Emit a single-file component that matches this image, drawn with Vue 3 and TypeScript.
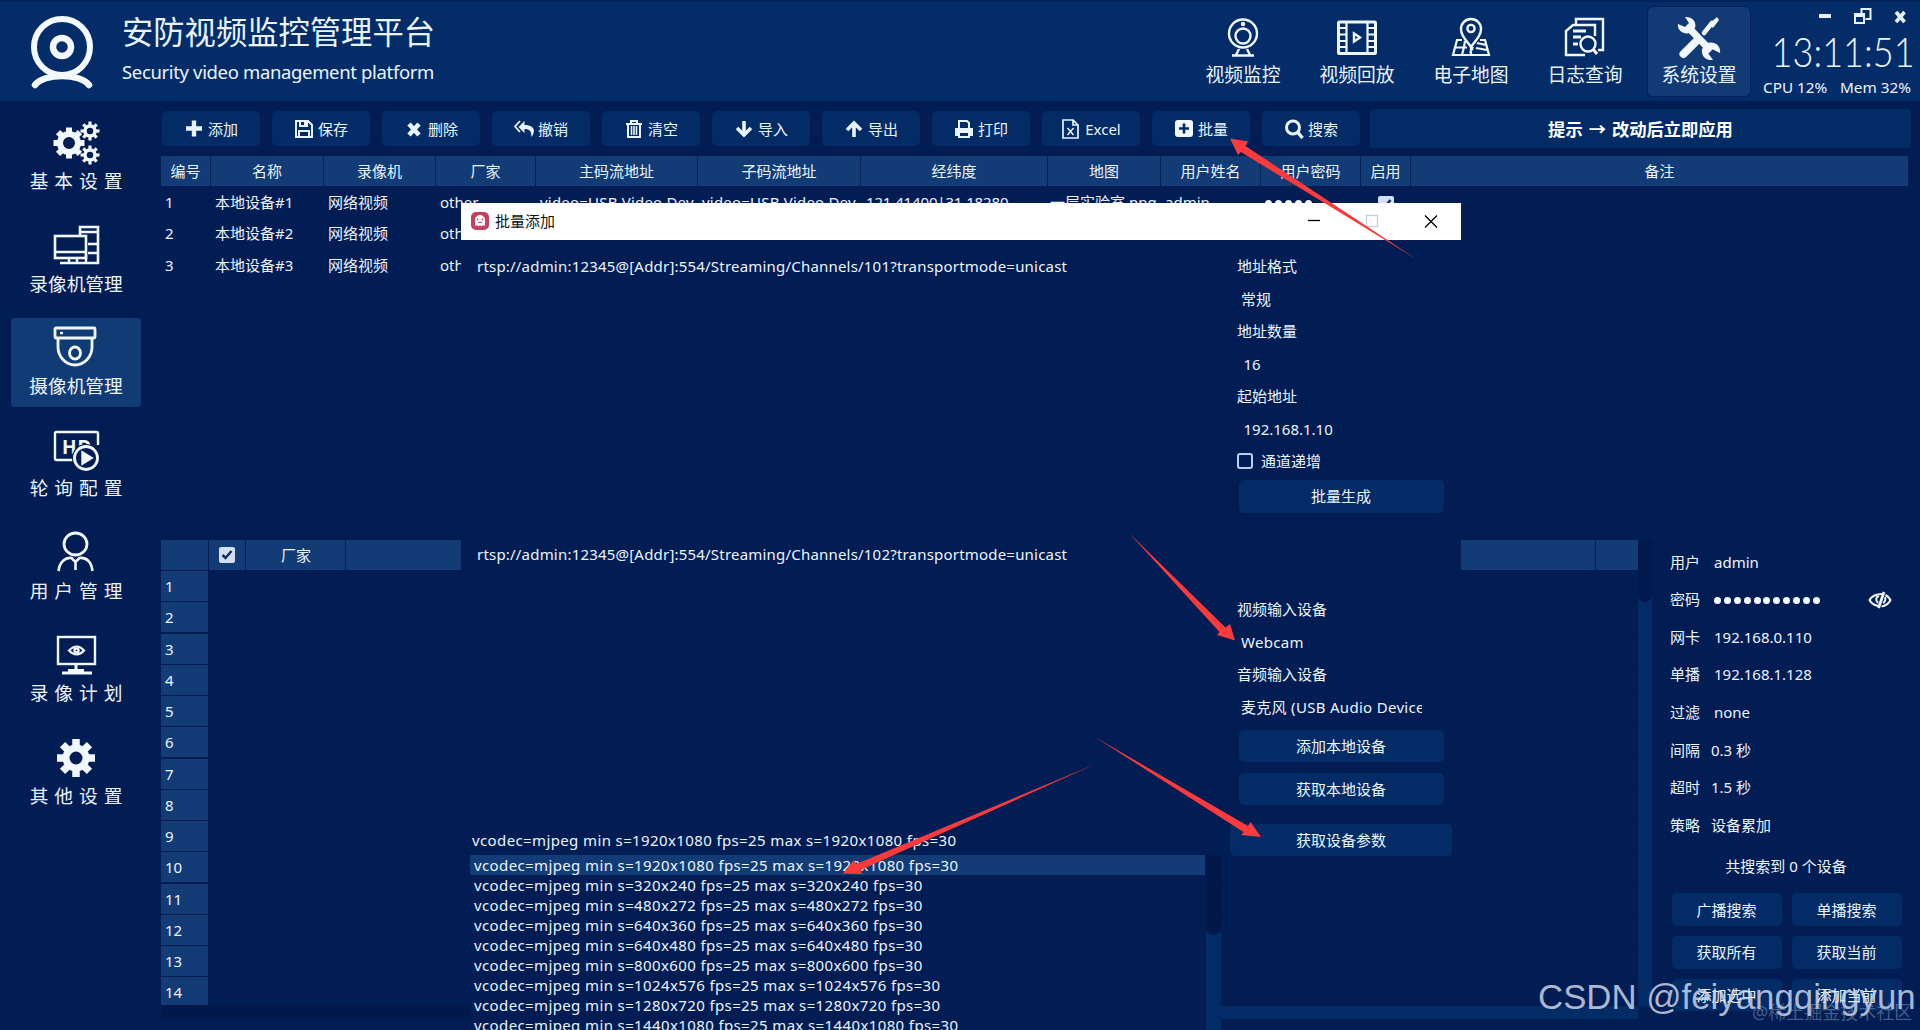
<script setup lang="ts">
import { ref } from 'vue'

interface Column { title: string; width: number }

const navItems = ['视频监控', '视频回放', '电子地图', '日志查询', '系统设置']
const sideItems = ['基本设置', '录像机管理', '摄像机管理', '轮询配置', '用户管理', '录像计划', '其他设置']
const tools = ['添加', '保存', '删除', '撤销', '清空', '导入', '导出', '打印', 'Excel', '批量', '搜索']
const activeNav = ref(4)
const activeSide = ref(2)

const columns: Column[] = [
  { title: '编号', width: 50 },
  { title: '名称', width: 113 },
  { title: '录像机', width: 112 },
  { title: '厂家', width: 100 },
  { title: '主码流地址', width: 162 },
  { title: '子码流地址', width: 163 },
  { title: '经纬度', width: 187 },
  { title: '地图', width: 113 },
  { title: '用户姓名', width: 100 },
  { title: '用户密码', width: 100 },
  { title: '启用', width: 50 },
  { title: '备注', width: 498 },
]
const videoName = 'video=USB Video Dev'
const devices = [1, 2, 3].map((n) => [
  String(n), '本地设备#' + n, '网络视频', 'other', videoName, videoName,
  '121.41400|31.18280', '一层实验室.png', 'admin', '', '', '',
])

const settings = [
  ['用户', 'admin', 'edit'],
  ['密码', '', 'edit'],
  ['网卡', '192.168.0.110', 'edit'],
  ['单播', '192.168.1.128', 'edit'],
  ['过滤', 'none', 'edit'],
  ['间隔', '0.3 秒', ''],
  ['超时', '1.5 秒', ''],
  ['策略', '设备累加', ''],
]
const searchButtons = ['广播搜索', '单播搜索', '获取所有', '获取当前', '添加选中', '添加当前']

const modes = [
  '1920x1080', '320x240', '480x272', '640x360', '640x480',
  '800x600', '1024x576', '1280x720', '1440x1080',
]
const modeText = (size: string) => `vcodec=mjpeg min s=${size} fps=25 max s=${size} fps=30`
const gearTeeth = [0, 45, 90, 135, 180, 225, 270, 315]
</script>

<template>
  <div class="page">
    <header class="top">
      <svg class="logo" width="64" height="74" viewBox="0 0 64 74" fill="none" stroke="#f4f9ff" stroke-linecap="round">
        <ellipse cx="32" cy="31" rx="28" ry="28" stroke-width="6" />
        <circle cx="32" cy="31" r="9" stroke-width="6.500" />
        <path d="M5 69C14 57 50 57 59 69" stroke-width="6.500" />
      </svg>
      <div class="titles">
        <div class="title">安防视频监控管理平台</div>
        <div class="subtitle">Security video management platform</div>
      </div>
      <nav class="nav">
        <div v-for="(item, i) in navItems" :key="item" class="nav-item" :class="{ on: i === activeNav }">
          <svg width="46" height="44" viewBox="0 0 46 44" fill="none" stroke="#f0f7ff" stroke-width="2.400">
            <g v-if="i === 0">
              <circle cx="23" cy="17.500" r="14" />
              <circle cx="23" cy="20" r="7.500" />
              <circle cx="23" cy="8" r="1" />
              <path d="M19 33l-3 6M27 33l3 6M12 39.500h22" />
            </g>
            <g v-else-if="i === 1">
              <rect x="4.500" y="6" width="37" height="31.500" rx="1" stroke-width="3" />
              <path d="M12.500 6v31M33.500 6v31M5 12h7M5 18.500h7M5 25h7M5 31h7M34 12h7M34 18.500h7M34 25h7M34 31h7" stroke-width="2.200" />
              <path d="M20 17.500v8l6-4z" />
            </g>
            <g v-else-if="i === 2">
              <path d="M23 31C17 23 13 19 13 13a10 10 0 0 1 20 0C33 19 29 23 23 31z" />
              <circle cx="23" cy="12.500" r="3.600" />
              <path d="M14 24H9L5 39h36L37 24h-5M7 31.500h12M29 27l9 2M28 32l11 2M17 25l-1 6-2 8M23 31v8M25 31l-3 6" stroke-width="2.200" />
            </g>
            <g v-else-if="i === 3">
              <path d="M14 8V3h27v31h-5" />
              <path d="M33 20V9H11L4 15v24h19" />
              <path d="M11 15h13M11 21h8M11 28h5" stroke-width="2.800" />
              <circle cx="26" cy="28" r="7.500" />
              <path d="M31 33l4 5" stroke-width="3" />
            </g>
            <g v-else stroke-linecap="round">
              <path d="M7.500 38L19 26.500" stroke-width="8" />
              <path d="M28 17L36 7" stroke-width="4.500" />
              <path d="M33 8l8-7 2 3-6 8z" fill="#f0f7ff" stroke="none" />
              <path d="M11 10L35 35" stroke-width="7" stroke-linecap="butt" />
              <path fill="#f0f7ff" stroke="none" d="M9 1l4 6-4 4-7-3C1 14 7 19 14 17l5-5C21 6 16 0 9 1zM37 44l-5-7 4-4 8 4c1-7-5-12-12-10l-6 6c-1 7 4 12 11 11z" />
            </g>
          </svg>
          <span>{{ item }}</span>
        </div>
      </nav>
      <div class="status">
        <svg class="winctl" width="96" height="20" viewBox="0 0 96 20" fill="none" stroke="#e8f2ff">
          <path d="M4 10h12" stroke-width="4" />
          <path d="M46.500 8V3h9v10h-5" stroke-width="2" />
          <rect x="40" y="8" width="9" height="9" stroke-width="2" />
          <path d="M39.500 9.500h10" stroke-width="3" />
          <path d="M81 6l8.500 10M89.500 6l-8.500 10" stroke-width="3.600" />
        </svg>
        <div class="clock"><span>13:11:51</span></div>
        <div class="usage"><span>CPU 12%</span><span>Mem 32%</span></div>
      </div>
    </header>

    <div class="body">
      <aside class="side">
        <div v-for="(item, i) in sideItems" :key="item" class="side-item" :class="{ on: i === activeSide, wide: item.length === 4 }">
          <svg width="50" height="44" viewBox="0 0 50 44" fill="none" stroke="#f0f7ff" stroke-width="2.400">
            <g v-if="i === 0">
              <circle cx="18" cy="22" r="9" stroke-width="6" />
              <g stroke-width="6"><path v-for="a in gearTeeth" :key="a" d="M18 11V6.500" :transform="`rotate(${a} 18 22)`" /></g>
              <g v-for="cy in [10, 34]" :key="cy">
                <circle cx="39" :cy="cy" r="5" stroke-width="3.500" />
                <path v-for="a in gearTeeth" :key="a" :d="`M39 ${cy - 6}v-3.500`" stroke-width="3.200" :transform="`rotate(${a} 39 ${cy})`" />
              </g>
            </g>
            <g v-else-if="i === 1">
              <path d="M29 12V4h18v36H9" stroke-width="2.600" />
              <rect x="4" y="13" width="31" height="22" stroke-width="2.600" />
              <path d="M4 29h31M29 9h18M37 21h9M37 30h9M18 35v4M26 35v4M35 31v8" />
            </g>
            <g v-else-if="i === 2">
              <rect x="4" y="2" width="40" height="10" rx="1" stroke-width="2.800" />
              <path d="M7 12v9c0 10 8 18 17 18s17-8 17-18v-9" stroke-width="2.800" />
              <ellipse cx="24" cy="27" rx="5.500" ry="6" stroke-width="2.800" />
              <path d="M9 7h3" />
            </g>
            <g v-else-if="i === 3">
              <path d="M22 32H5.500Q4 32 4 30.500V5.500Q4 4 5.500 4h40Q47 4 47 5.500V17" />
              <text x="11" y="25.500" class="hd">HD</text>
              <circle cx="35" cy="30" r="14" fill="#021d54" stroke="none" />
              <circle cx="35" cy="30" r="11.500" stroke-width="2.800" />
              <path d="M31.500 24.500v11l9-5.500z" fill="#f0f7ff" />
            </g>
            <g v-else-if="i === 4">
              <ellipse cx="24.500" cy="14" rx="11.500" ry="11" stroke-width="2.800" />
              <path d="M7.500 41c1-9 7-14 13-13l4 4 4-4c7-1 12 4 13 13M24.500 32v8" stroke-width="2.600" />
            </g>
            <g v-else-if="i === 5">
              <rect x="7" y="4" width="37" height="27" />
              <path d="M25 31v9M11 40h30" stroke-width="3" />
              <path d="M17 39h16v-3H17z" fill="#f0f7ff" stroke="none" />
              <path d="M18 17.500q8-8 15 0q-7 8-15 0z" stroke-width="2.200" />
              <circle cx="25.500" cy="17.500" r="2" />
            </g>
            <g v-else>
              <circle cx="25" cy="23" r="10" stroke-width="7" />
              <g stroke-width="7.500"><path v-for="a in gearTeeth" :key="a" d="M25 10.500V4" :transform="`rotate(${a} 25 23)`" /></g>
            </g>
          </svg>
          <span>{{ item }}</span>
        </div>
      </aside>

      <main class="main">
        <div class="toolbar">
          <button v-for="(t, i) in tools" :key="t" type="button" class="btn tool">
            <svg width="20" height="20" viewBox="0 0 20 20" fill="none" stroke="#e8f3ff" stroke-width="2">
              <path v-if="i === 0" d="M10 1.500v16M2 9.500h16" stroke-width="4.400" />
              <g v-else-if="i === 1"><path d="M2 2h12l4 4v12H2zM6 2v5h7V2M5 18v-6h10v6" /><path d="M11 3v3" /></g>
              <path v-else-if="i === 2" d="M5 5l10 11M15 5L5 16" stroke-width="4.600" />
              <g v-else-if="i === 3"><path d="M10.500 2L4.500 8l6 6v-4c5 0 7 2 7 8 5-7 2-12-7-12z" fill="#e8f3ff" stroke="none" /><path d="M6 2L1 7.500 6 13" stroke-width="1.800" /></g>
              <g v-else-if="i === 4"><path d="M4 6v12h12V6M2 5h16M7 4V2h6v2" /><path d="M7.500 7v9M10 7v9M12.500 7v9" stroke-width="1.600" /></g>
              <path v-else-if="i === 5" d="M10 2v14M3 9l7 7 7-7" stroke-width="3.600" />
              <path v-else-if="i === 6" d="M10 18V4M3 11l7-7 7 7" stroke-width="3.600" />
              <g v-else-if="i === 7"><path d="M5 9V2h8l2 2v5" /><path d="M1 9h18v8h-3v-3H4v3H1z" fill="#e8f3ff" stroke="none" /><path d="M5 14v4h10v-4" /></g>
              <g v-else-if="i === 8"><path d="M2 1h10l5 5v13H2zM12 1v5h5" stroke-width="1.700" /><path d="M6.500 9l6 7M12.500 9l-6 7" stroke-width="1.500" /></g>
              <g v-else-if="i === 9"><rect x="1" y="1" width="18" height="17" rx="3" fill="#f4f9ff" stroke="none" /><path d="M10 4.500v10M5 9.500h10" stroke="#032c66" stroke-width="2.600" /></g>
              <g v-else><circle cx="9" cy="8.500" r="6.500" stroke-width="3" /><path d="M13.500 13l5 6" stroke-width="3.400" /></g>
            </svg>
            <span>{{ t }}</span>
          </button>
          <div class="hint">提示 → 改动后立即应用</div>
        </div>

        <section class="devices">
          <div class="tr head">
            <div v-for="c in columns" :key="c.title" class="th" :style="{ width: c.width + 'px' }">{{ c.title }}</div>
          </div>
          <div v-for="row in devices" :key="row[0]" class="tr">
            <div v-for="(cell, j) in row" :key="j" class="td" :style="{ width: columns[j].width + 'px' }">
              <span v-if="j === 9" class="dots small"><i v-for="d in 5" :key="d"></i></span>
              <span v-else-if="j === 10" class="check on"><svg width="16" height="16" viewBox="0 0 16 16" fill="none" stroke="#12305f" stroke-width="2.500"><path d="M3.500 8l3 3 6-7" /></svg></span>
              <template v-else>{{ cell }}</template>
            </div>
          </div>
        </section>

        <div class="lower">
          <section class="found">
            <div class="found-main">
              <div class="frow fhead">
                <div class="f0"></div>
                <div class="f1"><span class="check on"><svg width="16" height="16" viewBox="0 0 16 16" fill="none" stroke="#12305f" stroke-width="2.500"><path d="M3.500 8l3 3 6-7" /></svg></span></div>
                <div class="f2">厂家</div>
                <div class="f3"></div>
                <div class="f4"></div>
              </div>
              <div v-for="n in 14" :key="n" class="frow">
                <div class="f0">{{ n }}</div>
                <div class="fline"></div>
              </div>
              <div class="hscroll"><i></i></div>
            </div>
            <div class="vscroll"><i></i></div>
          </section>

          <section class="panel">
            <div v-for="s in settings" :key="s[0]" class="field">
              <span class="lab">{{ s[0] }}</span>
              <span v-if="s[0] === '密码'" class="dots"><i v-for="d in 11" :key="d"></i></span>
              <span v-else class="val" :class="s[2]">{{ s[1] }}</span>
              <svg v-if="s[0] === '密码'" class="eye" width="24" height="18" viewBox="0 0 24 18" fill="none" stroke="#f0f7ff" stroke-width="2">
                <path d="M10 15C6 14 3 12 1.500 9 4 5 8 3 14 3M17.500 4c2 1 4 3 5 5-2 4-5 6-9 6.500" />
                <path d="M10.500 17L16 1" stroke-width="2.800" />
                <path d="M11 5c-3 1-4 4-1 7M17 6c1 2 0 5-2 6" />
              </svg>
            </div>
            <div class="count">共搜索到 0 个设备</div>
            <div class="grid">
              <button v-for="b in searchButtons" :key="b" type="button" class="btn">{{ b }}</button>
            </div>
          </section>
        </div>
      </main>
    </div>

    <section class="dialog">
      <div class="dlg-title">
        <svg width="18" height="18" viewBox="0 0 18 18">
          <rect width="18" height="18" rx="5" fill="#c4405f" />
          <path d="M4 14V8a5 5 0 0 1 10 0v6l-2-1-1.500 1.500L9 13l-1.500 1.500L6 13z" fill="#fff" />
          <path d="M6.500 6.500v2M11.500 6.500v2M7 10.500h4" stroke="#c4405f" stroke-width="1.200" />
        </svg>
        <span>批量添加</span>
        <svg class="dlg-ctl" width="132" height="14" viewBox="0 0 132 14" fill="none" stroke="#000" stroke-width="1.300">
          <path d="M0 6.500h12" />
          <rect x="58.500" y="1.500" width="11" height="11" stroke="#c4d2d4" />
          <path d="M117 1.500l12 12M129 1.500l-12 12" />
        </svg>
      </div>
      <div class="dlg-body">
        <div class="urls">
          <div class="url first">rtsp://admin:12345@[Addr]:554/Streaming/Channels/101?transportmode=unicast</div>
          <div class="url second">rtsp://admin:12345@[Addr]:554/Streaming/Channels/102?transportmode=unicast</div>
          <div class="combo">{{ modeText('1920x1080') }}</div>
        </div>
        <div class="form">
          <div class="fl">地址格式</div>
          <div class="fv sel">常规</div>
          <div class="fl">地址数量</div>
          <div class="fv">16</div>
          <div class="fl">起始地址</div>
          <div class="fv">192.168.1.10</div>
          <div class="fl inc"><i class="box"></i>通道递增</div>
          <button type="button" class="btn gen">批量生成</button>
          <div class="fl vin">视频输入设备</div>
          <div class="fv sel cam">Webcam</div>
          <div class="fl">音频输入设备</div>
          <div class="fv sel mic">麦克风 (USB Audio Device)</div>
          <button type="button" class="btn b1">添加本地设备</button>
          <button type="button" class="btn b2">获取本地设备</button>
          <button type="button" class="btn b3">获取设备参数</button>
        </div>
      </div>
    </section>

    <div class="popup">
      <div class="opts">
        <div v-for="(m, i) in modes" :key="m" class="opt" :class="{ on: i === 0 }">{{ modeText(m) }}</div>
      </div>
      <div class="pscroll"><i></i></div>
    </div>

    <svg class="arrows" width="1920" height="1030" viewBox="0 0 1920 1030" fill="#fb3b3b">
      <path d="M1230 138.500L1248 141.500 1245.500 146 1417 259.500 1241 152 1238 155z" />
      <path d="M1235 640.500L1230 624 1225.500 627.500 1129 533 1219.500 632 1217 635z" />
      <path d="M1261 837L1250.500 822 1248 826 1094 736.500 1243.500 832 1241 835z" />
      <path d="M843 873.500L854 860 856.500 864 1095.500 764 860.500 870 862 874z" />
    </svg>
    <div class="mark csdn">CSDN @feiyangqingyun</div>
    <div class="mark juejin">@稀土掘金技术社区</div>
  </div>
</template>

<style>
body { background: #021d54; overflow: hidden; }
</style>

<style scoped>
.page {
  position: relative; width: 1920px; height: 1030px; overflow: hidden;
  display: flex; flex-direction: column; background: #021d54; color: #eaf4ff;
  font: 15px/20px "Noto Sans", "Noto Sans CJK SC", sans-serif; white-space: nowrap;
}
.page, .page * { box-sizing: border-box; }
i { display: block; }
.btn {
  border: 0; border-radius: 5px; background: #032c66; color: #eaf4ff; padding: 0;
  font: 15px/20px "Noto Sans", "Noto Sans CJK SC", sans-serif;
}

.top { flex: none; height: 101px; display: flex; background: #032c68; border-top: 2px solid #02245a; }
.logo { margin: 14px 0 0 30px; }
.titles { margin-left: 28px; width: 400px; }
.title { font-size: 31.300px; line-height: 40px; margin-top: 10px; }
.subtitle { font-size: 18.500px; line-height: 26px; margin-top: 7px; letter-spacing: -.35px; }
.nav { margin-left: auto; display: flex; gap: 12px; padding-top: 5px; }
.nav-item {
  width: 102px; height: 89px; border-radius: 5px; padding-top: 9px;
  display: flex; flex-direction: column; align-items: center; font-size: 18.800px; line-height: 30px;
}
.nav-item.on { background: #123b76; box-shadow: 0 0 0 1px #02215a; }
.nav-item span { margin-top: 0; }
.status { width: 170px; padding: 4px 9px 0 13px; display: flex; flex-direction: column; }
.winctl { align-self: flex-end; }
.clock { height: 46px; display: flex; align-items: center; padding-top: 3px; }
.clock span {
  font: 300 42px/46px Lato, "Noto Sans", sans-serif; width: 165px; padding-left: 10px;
  transform: scaleX(.86); transform-origin: 0 50%;
}
.usage { display: flex; justify-content: space-between; font-size: 15.300px; line-height: 20px; margin-top: 5px; }

.body { flex: 1; min-height: 0; display: flex; }
.side { width: 161px; flex: none; padding: 11.800px 0 0 11px; display: flex; flex-direction: column; gap: 12.800px; }
.side-item {
  width: 130px; height: 89.600px; border-radius: 4px; padding-top: 8px;
  display: flex; flex-direction: column; align-items: center; font-size: 18.700px; line-height: 26px;
}
.side-item.on { background: #113b75; }
.side-item span { margin-top: 3.400px; }
.side-item.wide span { letter-spacing: 6px; margin-right: -6px; }
.hd { font: bold 19px "Noto Sans", sans-serif; fill: #f0f7ff; stroke: none; letter-spacing: 1px; }

.main { flex: 1; min-width: 0; display: flex; flex-direction: column; }
.toolbar { height: 55px; padding: 8px 0 0 1px; display: flex; gap: 12px; }
.tool { width: 98px; height: 35px; margin-top: 2px; flex: none; display: flex; align-items: center; justify-content: center; gap: 4px; }
.hint {
  width: 541px; height: 39px; margin-left: -2px; border-radius: 4px; background: #032c66; color: #fff;
  font-weight: 700; font-size: 17.300px; line-height: 41px; text-align: center; word-spacing: 1.500px;
}
.devices { height: 384px; width: 1748px; }
.tr { display: flex; height: 31.300px; }
.tr.head { height: 30px; margin-bottom: 1px; }
.th { flex: none; background: #133c77; border-right: 1px solid #032358; text-align: center; line-height: 31px; }
.td { flex: none; padding-left: 4px; line-height: 31px; overflow: hidden; }
.td:nth-child(5), .td:nth-child(6) { letter-spacing: .2px; }
.td:nth-child(7) { padding-left: 5px; letter-spacing: -.15px; }
.td:nth-child(8) { padding-left: 2px; }
.check { display: inline-flex; width: 16px; height: 16px; border-radius: 2px; background: #d3def5; vertical-align: middle; }
.td .check { margin-left: 13px; }
.dots { display: inline-flex; gap: 2.800px; align-items: center; }
.dots i { width: 7px; height: 7px; border-radius: 50%; background: #f4f9ff; }
.dots.small { gap: 3px; vertical-align: middle; }

.lower { flex: 1; display: flex; }
.found { width: 1491px; display: flex; flex: none; }
.found-main { width: 1477px; }
.frow { display: flex; height: 31.250px; padding-bottom: 1.200px; line-height: 30px; }
.frow:nth-child(15) { height: 28px; padding: 0; }
.fhead { height: 31px; padding-bottom: 1px; gap: 1px; text-align: center; }
.f0 { width: 47px; background: #133c77; padding-left: 4px; }
.f1, .f2, .f3, .f4 { background: #133c77; }
.f1 { width: 36px; display: flex; align-items: center; justify-content: center; }
.f2 { width: 99px; padding-left: 1px; }
.f3 { flex: 1; }
.f4 { width: 42px; }
.fline { flex: 1; box-shadow: 0 1px 0 #031b4e; }
.hscroll { height: 14px; background: #032c66; display: flex; }
.hscroll i { width: 1060px; background: #02184a; border-radius: 0 7px 7px 0; }
.vscroll { width: 14px; height: 466px; background: #032c66; }
.vscroll i { height: 62px; background: #02194d; border-radius: 0 0 7px 7px; }
.panel { padding: 3px 0 0 18px; width: 268px; }
.field { height: 37.550px; display: flex; align-items: center; }
.lab { width: 41px; }
.val.edit, .field .dots { margin-left: 3px; }
.field .dots { margin-top: 3px; gap: 2.900px; }
.eye { margin: 2px 28px 0 auto; }
.count { text-align: center; width: 232px; line-height: 24px; margin-top: 11px; }
.grid { display: grid; grid-template-columns: 110px 110px; gap: 10px; margin: 15px 0 0 1.500px; grid-auto-rows: 32.600px; }

.dialog { position: absolute; left: 461px; top: 203px; width: 1000px; height: 663px; background: #021d54; display: flex; flex-direction: column; }
.dlg-title { height: 37px; background: #fff; color: #111; display: flex; align-items: center; padding: 0 21px 2px 10px; }
.dlg-title span { margin-left: 6px; }
.dlg-ctl { margin-left: auto; }
.dlg-body { flex: 1; display: flex; }
.urls { width: 758px; padding: 16px 0 0 11px; display: flex; flex-direction: column; }
.url { padding-left: 5px; letter-spacing: .2px; }
.second { margin-top: 268px; }
.combo, .opt { letter-spacing: .38px; }
.combo { margin-top: 265.500px; }
.form { width: 242px; padding: 10px 0 0 18px; display: flex; flex-direction: column; align-items: flex-start; line-height: 32.500px; }
.fl, .fv { height: 32.500px; }
.fv { padding-left: 6.500px; line-height: 32px; }
.fv.sel { padding-left: 4px; }
.cam { letter-spacing: .3px; }
.inc { display: flex; align-items: center; }
.box { width: 16px; height: 16px; border: 2px solid #b9cdf0; border-radius: 3px; margin-right: 8px; }
.gen { width: 205px; height: 33px; margin: 2px 0 0 1.500px; }
.vin { margin-top: 80.500px; }
.mic { width: 185px; overflow: hidden; letter-spacing: .3px; }
.b1 { width: 205px; height: 32px; margin: 7px 0 0 1.500px; }
.b2 { width: 205px; height: 32px; margin: 11px 0 0 1.500px; }
.b3 { width: 222px; height: 32px; margin: 19px 0 0 -7px; }

.popup { position: absolute; left: 470px; top: 855px; width: 751px; height: 175px; display: flex; gap: 1px; background: #021d54; overflow: hidden; }
.opts { width: 735px; }
.opt { height: 20px; padding-left: 4px; }
.opt.on { background: #133c77; }
.pscroll { width: 15px; background: #032c66; }
.pscroll i { height: 80px; background: #02184a; border-radius: 0 0 7px 7px; }
.arrows { position: absolute; left: 0; top: 0; pointer-events: none; }
.mark { position: absolute; pointer-events: none; }
.csdn { left: 1538px; top: 976px; font: 34.800px/42px "Liberation Sans", sans-serif; color: rgba(212, 219, 238, .82); }
.juejin { left: 1752px; top: 1000px; font: 18px/24px "Noto Sans", "Noto Sans CJK SC", sans-serif; color: rgba(170, 180, 205, .42); }
</style>
